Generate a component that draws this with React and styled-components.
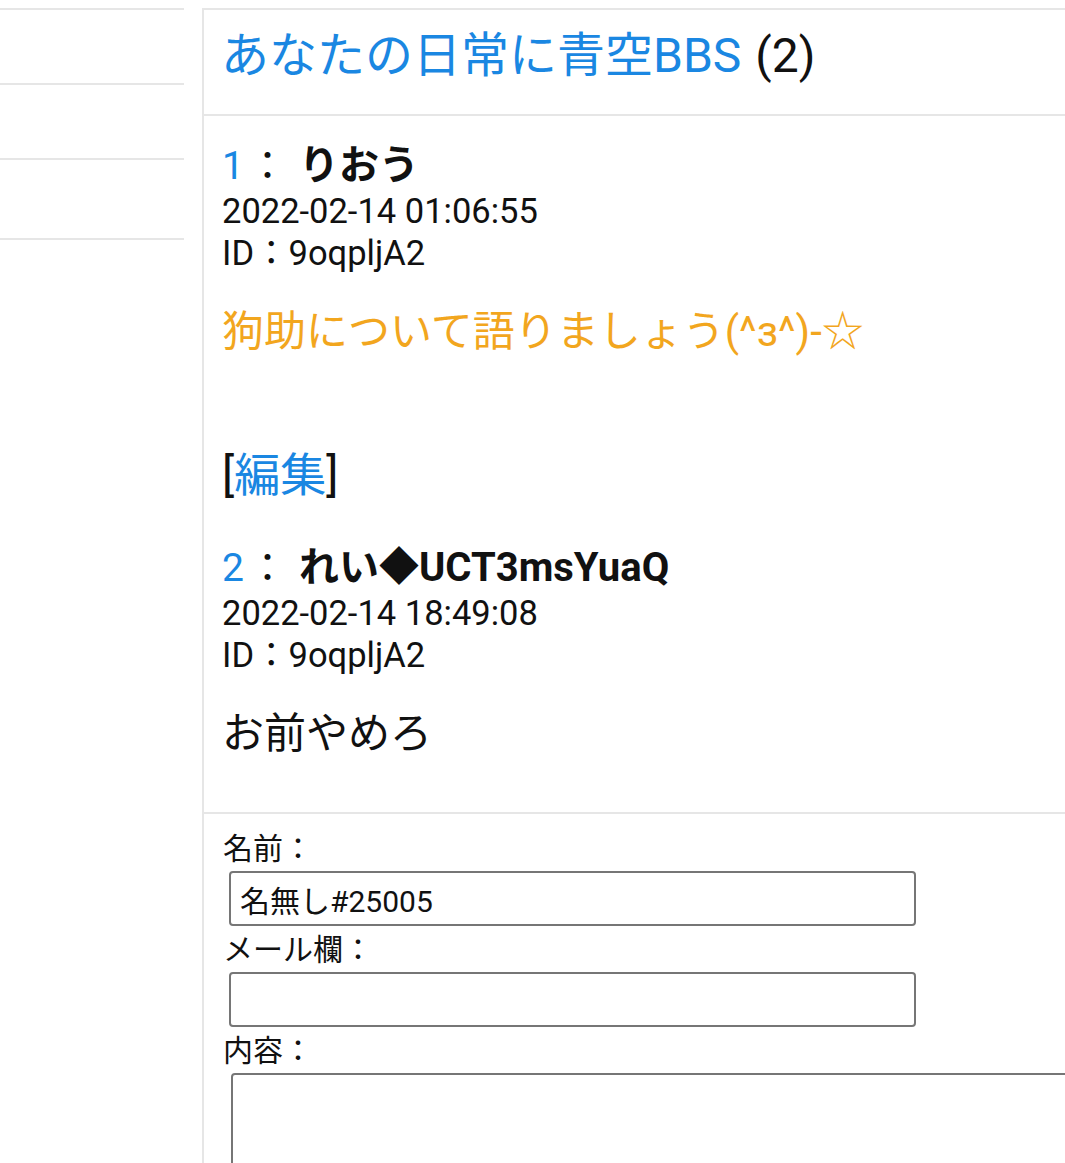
import styled, { createGlobalStyle } from "styled-components"

const GlobalStyle = createGlobalStyle`
  html, body {
    margin: 0;
    padding: 0;
    background: #ffffff;
    overflow: hidden;
  }
  body {
    font-family: Roboto, "Noto Sans CJK JP", sans-serif;
    color: #111111;
  }
`

const posts = [
  {
    no: 1,
    name: "りおう",
    date: "2022-02-14 01:06:55",
    id: "9oqpljA2",
    body: "狗助について語りましょう(^з^)-☆",
    color: "#f2a61e",
    editable: true,
  },
  {
    no: 2,
    name: "れい◆UCT3msYuaQ",
    date: "2022-02-14 18:49:08",
    id: "9oqpljA2",
    body: "お前やめろ",
    color: "#111111",
    editable: false,
  },
]

export default function App() {
  return (
    <>
      <GlobalStyle />
      <Page>
        <Sidebar>
          <SideItem $h={73} />
          <SideItem $h={73} />
          <SideItem $h={78} />
        </Sidebar>
        <Panel>
          <Header>
            <Title>あなたの日常に青空BBS</Title>
            <Count>(2)</Count>
          </Header>
          <Thread>
            {posts.map((p) => (
              <Post key={p.no}>
                <PostHead>
                  <No>{p.no}</No>
                  <Colon>：</Colon>
                  <Name>{p.name}</Name>
                </PostHead>
                <Meta>{p.date}</Meta>
                <Meta>ID：{p.id}</Meta>
                <Message $color={p.color}>{p.body}</Message>
                {p.editable && (
                  <Edit>
                    [<a href="#">編集</a>]
                  </Edit>
                )}
              </Post>
            ))}
          </Thread>
          <Form onSubmit={(e) => e.preventDefault()}>
            <Label>名前：</Label>
            <Input type="text" defaultValue="名無し#25005" />
            <Label>メール欄：</Label>
            <Input type="text" />
            <Label>内容：</Label>
            <TextArea />
          </Form>
        </Panel>
      </Page>
    </>
  )
}

const Page = styled.div`
display: flex;
gap: 18px;
align-items: flex-start;
width: 1400px;
`

const Sidebar = styled.div`
width: 184px;
flex-shrink: 0;
padding-top: 8px;
& > div:first-child{
    border-top: 2px solid #e6e6e6;
}
`

const SideItem = styled.div`
height: ${props => props.$h}px;
border-bottom: 2px solid #e6e6e6;
`

const Panel = styled.div`
margin-top: 8px;
width: 1000px;
flex-shrink: 0;
border-top: 2px solid #e6e6e6;
border-left: 2px solid #e6e6e6;
`

const Header = styled.div`
height: 92px;
display: flex;
align-items: center;
gap: 14px;
padding: 0 17px 12px 17px;
border-bottom: 2px solid #e6e6e6;
font-size: 48px;
line-height: 1;
`

const Title = styled.a`
color: #1a87e2;
text-decoration: none;
`

const Count = styled.span`
color: #111111;
`

const Thread = styled.div`
padding: 26px 19px 52px 18px;
`

const Post = styled.div`
& + &{
    margin-top: 41px;
}
`

const PostHead = styled.div`
font-size: 39px;
line-height: 48px;
display: flex;
align-items: baseline;
`

const No = styled.span`
color: #1a87e2;
`

const Colon = styled.span`
margin: 0 12px 0 4px;
`

const Name = styled.b`
font-weight: 700;
font-size: 40px;
`

const Meta = styled.div`
font-size: 34.5px;
line-height: 42px;
&:first-of-type{
    margin-top: 3px;
}
`

const Message = styled.div`
margin-top: 32px;
font-size: 42px;
line-height: 52px;
color: ${props => props.$color};
`

const Edit = styled.div`
margin-top: 89px;
font-size: 46px;
line-height: 56px;
a{
    color: #1a87e2;
    text-decoration: none;
}
`

const Form = styled.form`
border-top: 2px solid #e6e6e6;
padding: 17px 19px 0 19px;
display: flex;
flex-direction: column;
align-items: flex-start;
`

const Label = styled.label`
font-size: 30px;
line-height: 36px;
& + input, & + textarea{
    margin-top: 4px;
}
input + &{
    margin-top: 6px;
}
`

const Input = styled.input`
box-sizing: border-box;
margin-left: 6px;
width: 687px;
height: 55px;
border: 2px solid #767676;
border-radius: 4px;
padding: 0 9px;
font-family: Roboto, "Noto Sans CJK JP", sans-serif;
font-size: 30px;
color: #111111;
background: #ffffff;
`

const TextArea = styled.textarea`
box-sizing: border-box;
margin-left: 8px;
width: 900px;
height: 200px;
border: 2px solid #767676;
border-radius: 4px;
font-family: Roboto, "Noto Sans CJK JP", sans-serif;
font-size: 30px;
resize: none;
`
